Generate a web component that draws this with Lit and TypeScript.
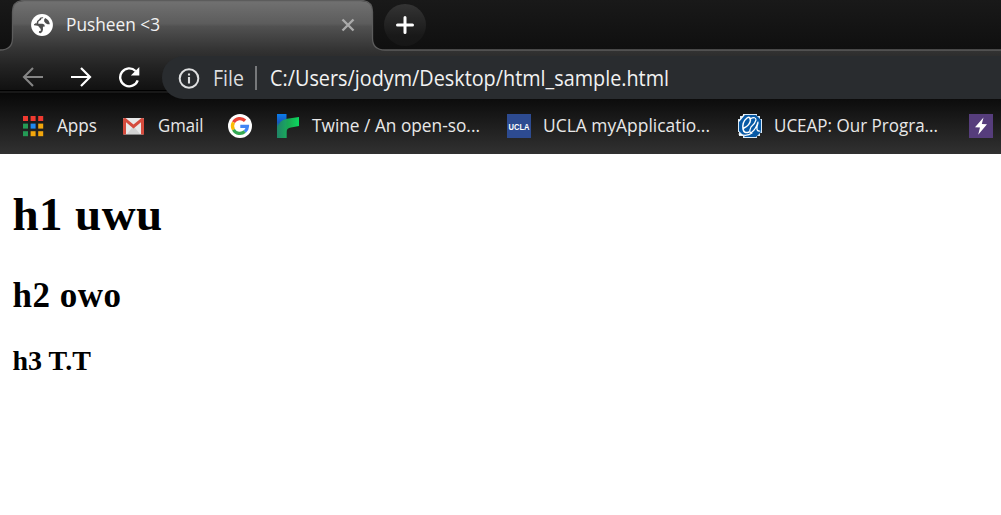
import { LitElement, html, svg, css } from 'lit';
import { customElement } from 'lit/decorators.js';

const label = (text: string, width: number, size = 18, cls = '') => html`
  <svg class="label ${cls}" width=${width + 4} height="30" viewBox="0 0 ${width + 4} 30">
    <text x="0" y="21" font-size=${size} textLength=${width} lengthAdjust="spacingAndGlyphs">${text}</text>
  </svg>`;

const appColors = ['#f03a30', '#f03a30', '#f03a30', '#249a55', '#1e88f0', '#f2a60c', '#249a55', '#f2a60c', '#f2a60c'];

@customElement('app-root')
export class AppRoot extends LitElement {
  static styles = css`
    :host { display: block; width: 1001px; height: 515px; overflow: hidden; background: #fff; color: #000; }
    svg { display: block; flex: none; }
    .chrome { position: relative; height: 154px; display: grid; grid-template-rows: 56px 43px 55px; font-family: "Open Sans", "Noto Sans", sans-serif; }
    .backdrop { position: absolute; inset: 0; }
    .strip, .toolbar, .bookmarks { position: relative; display: flex; min-width: 0; }
    .strip { box-sizing: border-box; height: 50px; }
    .tab { width: 342px; padding-left: 30px; display: flex; align-items: center; }
    .label { fill: #f2f2f2; overflow: visible; }
    .tab-title { margin: -1px 0 0 12px; }
    .close { margin-left: 177px; }
    .new { margin: 4px 0 0 12px; width: 42px; height: 42px; border-radius: 50%; background: linear-gradient(#343434, #191919 75%, #161616); display: grid; place-items: center; }
    .toolbar { padding-left: 22px; }
    .nav { display: flex; width: 140px; gap: 26px; padding-top: 10px; box-sizing: border-box; }
    .omnibox { flex: 1; height: 43px; background: #292c2f; border-radius: 22px 0 0 22px; display: flex; align-items: center; padding-left: 16px; }
    .scheme { margin: 4px 0 0 13px; fill: #dcdddf; }
    .divider { width: 2px; height: 24px; background: #77797b; margin: 0 13px 0 7px; }
    .url { margin-top: 4px; }
    .bookmarks { padding-left: 22px; align-items: flex-start; }
    .item { display: flex; align-items: center; height: 30px; margin-top: 12px; }
    .item .label { fill: #e8e8e8; }
    .ucla { overflow: visible; }
    .page { padding: 0 12.5px; font-family: "Liberation Serif", serif; display: flow-root; }
    h1, h2, h3 { font-weight: bold; }
    h1 { font-size: 47px; line-height: 55px; letter-spacing: .4px; margin: 33px 0 31px; }
    h2 { font-size: 35px; line-height: 41px; letter-spacing: .5px; margin: 33px 0 29px; }
    h3 { font-size: 28px; margin: 28px 0; }
  `;

  backdrop() {
    return html`<svg class="backdrop" width="1001" height="154" viewBox="0 0 1001 154">
      <defs>
        <linearGradient id="top" x2="0" y2="1"><stop stop-color="#191919"/><stop offset="1" stop-color="#0f0f0f"/></linearGradient>
        <linearGradient id="frame" gradientUnits="userSpaceOnUse" x1="0" y1="0" x2="0" y2="91">
          <stop stop-color="#727272"/><stop offset=".26" stop-color="#5c5c5c"/><stop offset=".29" stop-color="#515151"/>
          <stop offset=".55" stop-color="#333"/><stop offset=".72" stop-color="#242424"/><stop offset="1" stop-color="#101010"/>
        </linearGradient>
        <linearGradient id="bar" x2="0" y2="1"><stop stop-color="#080808"/><stop offset="1" stop-color="#313131"/></linearGradient>
      </defs>
      <rect width="1001" height="51" fill="url(#top)"/>
      <path d="M0 50Q12.5 50 12.5 38V12Q12.5 1 24 1H361Q372.5 1 372.5 12V38Q372.5 50 385 50H1001V91H0Z" fill="url(#frame)"/>
      <path d="M0 50Q12.5 50 12.5 38V12Q12.5 .5 24 .5H361Q372.5 .5 372.5 12V38Q372.5 50 385 50H1001" fill="none" stroke="#5c5c5c" stroke-width="1.3"/>
      <rect y="90" width="1001" height="1" fill="#000"/>
      <rect y="91" width="1001" height="2" fill="#181818"/>
      <rect y="93" width="1001" height="61" fill="url(#bar)"/>
    </svg>`;
  }

  render() {
    return html`
      <header class="chrome">
        ${this.backdrop()}
        <div class="strip">
          <div class="tab">
            <svg width="24" height="24" viewBox="0 0 24 24">
              <circle cx="12" cy="12" r="10.9" fill="#fff"/>
              <path d="M13.4 4.2Q13.2 5.6 11.4 5.6Q11.2 7.4 9.8 7.6Q8 8 8.2 10.7H12.4Q14.9 11 14.9 13.4H13.5Q12.5 13.8 13 16.4Q13 18.4 10.8 20.2Q9.6 20.1 8.8 19.6L9.2 17.9H10.7Q11.4 15.8 9.6 14.7Q8.3 12.3 4 12.3V11.2L5.4 10.6Q5.3 7.3 8.5 5.4Q10.5 4.1 13.4 4.2ZM15.2 5Q19.3 7 19.8 11.2H17.5Q15.4 10.5 14.2 8.4Q13.6 6.1 15.2 5Z" fill="#4e4e4e"/>
              <path d="M4.5 9.8Q5.8 5.2 10.6 4.1L9.2 6.2Q6.5 7.6 6.5 10.5Z" fill="#fff"/>
            </svg>
            ${label('Pusheen <3', 94, 18, 'tab-title')}
            <svg class="close" width="14" height="14" viewBox="0 0 14 14"><path d="M1.5 1.5 12.5 12.5M12.5 1.5 1.5 12.5" stroke="#aaa" stroke-width="2.4"/></svg>
          </div>
          <div class="new"><svg width="18" height="18" viewBox="0 0 18 18"><path d="M9 1.5V16.5M1.5 9H16.5" stroke="#fff" stroke-width="3" stroke-linecap="round"/></svg></div>
        </div>
        <div class="toolbar">
          <div class="nav">
            <svg width="22" height="22" viewBox="0 0 22 22" fill="none" stroke="#858585" stroke-width="2.1"><path d="M21 11H2.5M11 2 2 11 11 20"/></svg>
            <svg width="22" height="22" viewBox="0 0 22 22" fill="none" stroke="#fff" stroke-width="2.2"><path d="M1 11H19.5M11 2 20 11 11 20"/></svg>
            <svg width="22" height="22" viewBox="0 0 22 22"><path d="M17.6 5A9 9 0 1 0 19.7 14.3" fill="none" stroke="#fff" stroke-width="2.4"/><path d="M21.3 1V9.5H12.8Z" fill="#fff"/></svg>
          </div>
          <div class="omnibox">
            <svg width="22" height="22" viewBox="0 0 22 22"><circle cx="11" cy="11.5" r="9.3" fill="none" stroke="#dedfe0" stroke-width="2"/><path d="M11 10V16.5M11 6.4V8.6" stroke="#dedfe0" stroke-width="2.1"/></svg>
            ${label('File', 31, 21, 'scheme')}
            <div class="divider"></div>
            ${label('C:/Users/jodym/Desktop/html_sample.html', 399, 21, 'url')}
          </div>
        </div>
        <nav class="bookmarks">
          <div class="item">
            <svg width="22" height="22" viewBox="0 0 22 22">${appColors.map((c, i) => svg`<rect x=${1 + (i % 3) * 7.6} y=${1 + Math.floor(i / 3) * 7.6} width="5" height="5" fill=${c}/>`)}</svg>
            <svg width="13" height="1"></svg>
            ${label('Apps', 40)}
          </div>
          <svg width="22" height="1"></svg>
          <div class="item">
            <svg width="22" height="22" viewBox="0 0 22 22"><rect x="0" y="3" width="21" height="16.5" rx="1.2" fill="#e8e8e8"/><path d="M4 19 10.5 11 17 19" fill="#d2d2d2"/><path d="M0 4.5Q0 3 1.5 3H2.5L10.5 9.6 18.5 3H19.5Q21 3 21 4.5V19.5H18V7.2L10.5 13.4 3 7.2V19.5H0Z" fill="#d54b3d"/></svg>
            <svg width="12.5" height="1"></svg>
            ${label('Gmail', 45.5)}
          </div>
          <svg width="21" height="1"></svg>
          <div class="item">
            <svg width="24" height="24" viewBox="0 0 24 24"><circle cx="12" cy="12" r="12" fill="#fff"/><g fill="none" stroke-width="3.3"><path d="M5.5 8.3A7.4 7.4 0 0 1 17.1 6.7" stroke="#ea4335"/><path d="M5.5 15.7A7.4 7.4 0 0 1 5.5 8.3" stroke="#fbbc05"/><path d="M16.8 17.6A7.4 7.4 0 0 1 5.5 15.7" stroke="#34a853"/><path d="M12.3 12.3H19.4A7.4 7.4 0 0 1 16.8 17.6" stroke="#4285f4"/></g></svg>
          </div>
          <svg width="25" height="1"></svg>
          <div class="item">
            <svg width="24" height="24" viewBox="0 0 24 24"><defs><linearGradient id="stem" x2="0" y2="1"><stop stop-color="#0a7dec"/><stop offset=".35" stop-color="#1756bc"/><stop offset=".6" stop-color="#1d8c68"/><stop offset="1" stop-color="#128c50"/></linearGradient><linearGradient id="branch"><stop stop-color="#208367"/><stop offset=".6" stop-color="#18b957"/><stop offset="1" stop-color="#09e563"/></linearGradient></defs><path d="M0 0H9.5V24H0Z" fill="url(#stem)"/><path d="M0 16Q1 6 10 4.7L22 3V12L14 13.5Q9.5 14.3 9.5 18V24H0Z" fill="url(#branch)" opacity=".94"/></svg>
            <svg width="11" height="1"></svg>
            ${label('Twine / An open-so...', 168)}
          </div>
          <svg width="23" height="1"></svg>
          <div class="item">
            <svg class="ucla" width="24" height="24" viewBox="0 0 24 24"><rect width="24" height="24" fill="#2d4b91"/><text x="1.5" y="16" font-family="Liberation Sans" font-weight="bold" font-size="9" textLength="21" lengthAdjust="spacingAndGlyphs" fill="#fff">UCLA</text></svg>
            <svg width="12" height="1"></svg>
            ${label('UCLA myApplicatio...', 167)}
          </div>
          <svg width="24" height="1"></svg>
          <div class="item">
            <svg width="24" height="24" viewBox="0 0 24 24"><path d="M5 0H19V2H22V5H24V19H22V22H19V24H5V22H1V18H0V5H2V2H5Z" fill="#dceaf5"/><path d="M6 1H18L23 6V18L18 23H7L1 17V6Z" fill="#0759a5"/><g fill="none" stroke="#fff" stroke-linecap="round"><path d="M6 14Q12 11 12.5 6Q12 2 9 4Q4 8 5 15Q6 20 11 18" stroke-width="1.5"/><path d="M12 5Q18 2 18 6Q17 10 13 13Q10 20 14 18Q18 15 20 8M20 9Q17 18 22 17M1 7 6 1M1 20Q9 23 14 19" stroke-width="1.2"/></g></svg>
            <svg width="12" height="1"></svg>
            ${label('UCEAP: Our Progra...', 164)}
          </div>
          <svg width="27" height="1"></svg>
          <div class="item">
            <svg width="24" height="24" viewBox="0 0 24 24"><rect width="24" height="24" fill="#563d7c"/><path d="M14.5 3.5 6 13.2 11 13.5 9.2 20.7 18 10.3 12.8 10Z" fill="#fff"/></svg>
          </div>
        </nav>
      </header>
      <main class="page"><h1>h1 uwu</h1><h2>h2 owo</h2><h3>h3 T.T</h3></main>`;
  }
}
